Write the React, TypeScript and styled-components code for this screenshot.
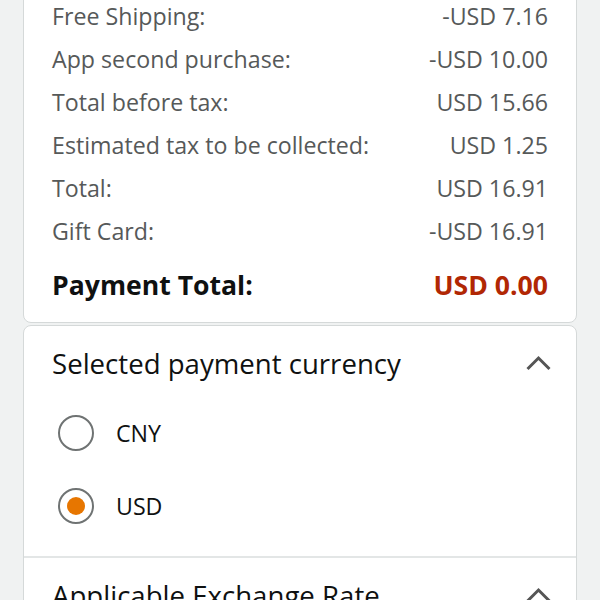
import React from "react";
import styled, { createGlobalStyle } from "styled-components";

const Global = createGlobalStyle`
  html, body { margin: 0; padding: 0; background: #f0f2f2; }
  body { font-family: "Open Sans", "Noto Sans", sans-serif; overflow: hidden; }
`;

const Page = styled.div`
  width: 600px;
  height: 600px;
  overflow: hidden;
  padding: 0 23px;
  box-sizing: border-box;
  display: flex;
  flex-direction: column;
  gap: 2px;
`;

const Card = styled.div<{ $cutTop?: boolean }>`
  background: #fff;
  border: 1px solid #d5d9d9;
  border-radius: 8px;
  ${(p) => (p.$cutTop ? "margin-top: -12px;" : "")}
`;

const Summary = styled.div`
  display: flex;
  flex-direction: column;
  padding: 5px 28px 4px 28px;
`;

const Row = styled.div`
  display: flex;
  justify-content: space-between;
  align-items: center;
  height: 43px;
  font-size: 23.2px;
  color: #565959;
`;

const TotalRow = styled.div`
  display: flex;
  justify-content: space-between;
  align-items: center;
  height: 66px;
  font-size: 26.6px;
  font-weight: 700;
  color: #0f1111;
`;

const Red = styled.span`
  color: #b12704;
`;

const Section = styled.div<{ $divider?: boolean }>`
  padding: 0 28px;
  ${(p) => (p.$divider ? "border-top: 2px solid #e3e6e6;" : "")}
`;

const Header = styled.div`
  display: flex;
  justify-content: space-between;
  align-items: center;
  height: 74px;
  font-size: 27.6px;
  color: #0f1111;
`;

const Options = styled.div`
  display: flex;
  flex-direction: column;
  gap: 7px;
  padding-bottom: 17px;
`;

const Option = styled.label`
  display: flex;
  align-items: center;
  gap: 22px;
  height: 66px;
  font-size: 23.2px;
  color: #0f1111;
  padding-left: 6px;
`;

const Radio = styled.span<{ $checked?: boolean }>`
  width: 36px;
  height: 36px;
  box-sizing: border-box;
  border-radius: 50%;
  border: 2px solid #6f7373;
  display: flex;
  align-items: center;
  justify-content: center;
  &::after {
    content: "";
    width: 18px;
    height: 18px;
    border-radius: 50%;
    background: ${(p) => (p.$checked ? "#e77600" : "transparent")};
  }
`;

const ChevronBox = styled.svg`
  margin-right: -4px;
  flex: none;
`;

const Chevron = () => (
  <ChevronBox width="26" height="16" viewBox="0 0 26 16">
    <polyline points="1.5,14 12.5,3 23.5,14" fill="none" stroke="#555" strokeWidth="3" />
  </ChevronBox>
);

const rows: [string, string][] = [
  ["Free Shipping:", "-USD 7.16"],
  ["App second purchase:", "-USD 10.00"],
  ["Total before tax:", "USD 15.66"],
  ["Estimated tax to be collected:", "USD 1.25"],
  ["Total:", "USD 16.91"],
  ["Gift Card:", "-USD 16.91"],
];

export default function App() {
  return (
    <>
      <Global />
      <Page>
        <Card $cutTop>
          <Summary>
            {rows.map(([l, v]) => (
              <Row key={l}>
                <span>{l}</span>
                <span>{v}</span>
              </Row>
            ))}
            <TotalRow>
              <span>Payment Total:</span>
              <Red>USD 0.00</Red>
            </TotalRow>
          </Summary>
        </Card>
        <Card>
          <Section>
            <Header>
              <span>Selected payment currency</span>
              <Chevron />
            </Header>
            <Options>
              <Option>
                <Radio />
                <span>CNY</span>
              </Option>
              <Option>
                <Radio $checked />
                <span>USD</span>
              </Option>
            </Options>
          </Section>
          <Section $divider>
            <Header>
              <span>Applicable Exchange Rate</span>
              <Chevron />
            </Header>
          </Section>
        </Card>
      </Page>
    </>
  );
}
